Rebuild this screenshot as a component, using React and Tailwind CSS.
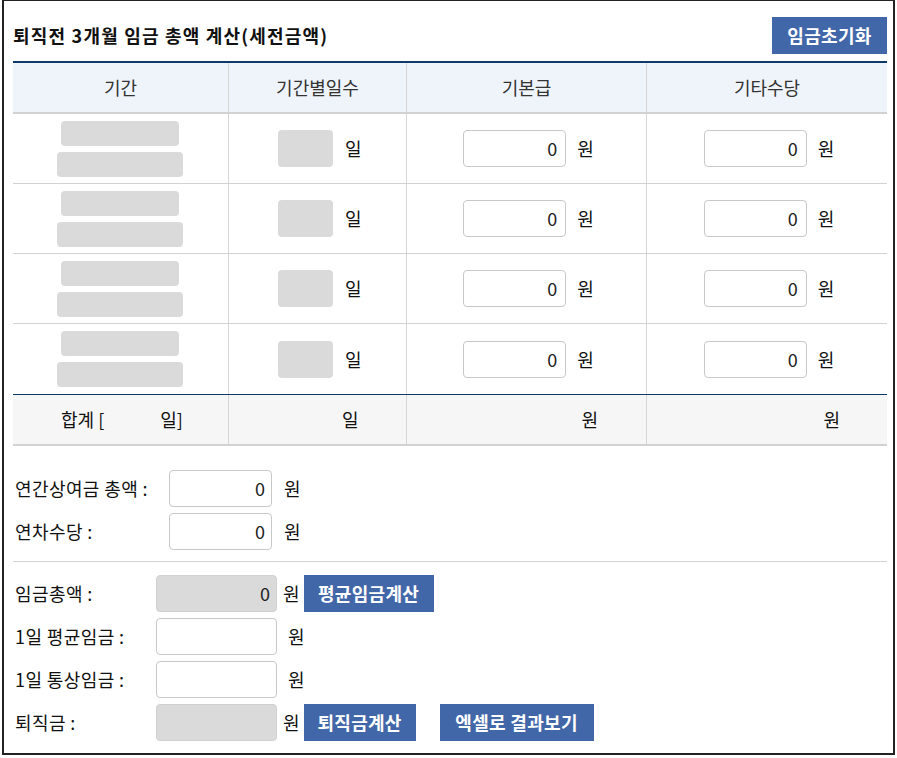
const font = { fontFamily: '"Noto Sans CJK KR", "Noto Sans", sans-serif' };

const rows = [0, 1, 2, 3];

function MoneyCell({ last }) {
  return (
    <div className={`flex items-center justify-center gap-[11px] pl-[4px] ${last ? "" : "border-r border-[#d6d6d6]"}`}>
      <div className="flex h-[37px] w-[103px] items-center justify-end rounded-[4px] border border-[#c8c8c8] bg-white pr-[8px] text-[18px] text-[#222]">
        0
      </div>
      <span className="text-[18px] text-[#111]">원</span>
    </div>
  );
}

function Btn({ children, className = "" }) {
  return (
    <button
      type="button"
      className={`flex h-[37px] items-center justify-center bg-[#4267a8] text-[18px] font-bold tracking-[0.3px] text-white ${className}`}
    >
      {children}
    </button>
  );
}

function FieldRow({ label, labelW, inputW, gray, value, unitGap, children }) {
  return (
    <div className="flex h-[37px] items-center">
      <span className="text-[18px] tracking-[0.4px] text-[#111]" style={{ width: labelW }}>
        {label}
      </span>
      <div
        className={`flex h-[37px] items-center justify-end rounded-[4px] border pr-[6px] text-[18px] text-[#222] ${
          gray ? "border-[#d0d0d0] bg-[#dadada]" : "border-[#c8c8c8] bg-white"
        }`}
        style={{ width: inputW }}
      >
        {value}
      </div>
      <span className="text-[18px] text-[#111]" style={{ marginLeft: unitGap }}>
        원
      </span>
      {children}
    </div>
  );
}

export default function App() {
  return (
    <div className="min-h-screen bg-white" style={font}>
      <div className="ml-[2px] w-[893px] border-2 border-t-[1px] border-[#222] bg-white pl-[9px] pr-[6px] pb-[12px]">
        <div className="flex h-[60px] items-center justify-between pt-[8px]">
          <h2 className="text-[18px] font-bold tracking-[1.2px] text-[#111]">
            퇴직전 3개월 임금 총액 계산(세전금액)
          </h2>
          <Btn className="w-[115px]">임금초기화</Btn>
        </div>

        <div className="border-t-2 border-[#0d3868]">
          <div className="grid h-[51px] grid-cols-[216px_178px_240px_240px] border-b-2 border-[#d2d2d2] bg-[#eff3fa] text-[18px] text-[#333]">
            <div className="flex items-center justify-center border-r border-[#d6d6d6]">기간</div>
            <div className="flex items-center justify-center border-r border-[#d6d6d6]">기간별일수</div>
            <div className="flex items-center justify-center border-r border-[#d6d6d6]">기본급</div>
            <div className="flex items-center justify-center">기타수당</div>
          </div>

          {rows.map((r) => (
            <div
              key={r}
              className={`grid h-[70px] grid-cols-[216px_178px_240px_240px] ${
                r < 3 ? "border-b border-[#d2d2d2]" : ""
              }`}
            >
              <div className="flex flex-col items-center justify-center gap-[6px] border-r border-[#d6d6d6] pr-[2px]">
                <div className="h-[25px] w-[118px] rounded-[4px] bg-[#dadada]" />
                <div className="h-[25px] w-[126px] rounded-[4px] bg-[#dadada]" />
              </div>
              <div className="flex items-center gap-[12px] border-r border-[#d6d6d6] pl-[49px]">
                <div className="h-[37px] w-[55px] rounded-[4px] bg-[#dadada]" />
                <span className="text-[18px] text-[#111]">일</span>
              </div>
              <MoneyCell />
              <MoneyCell last />
            </div>
          ))}

          <div className="grid h-[52px] grid-cols-[216px_178px_240px_240px] border-t border-b-2 border-t-[#0d3868] border-b-[#d2d2d2] bg-[#f6f6f6] text-[18px] text-[#111]">
            <div className="flex items-center border-r border-[#d6d6d6] pl-[48px]">
              <span>합계 [</span>
              <span className="ml-[56px]">일]</span>
            </div>
            <div className="flex items-center border-r border-[#d6d6d6] pl-[113px]">일</div>
            <div className="flex items-center justify-end border-r border-[#d6d6d6] pr-[48px]">원</div>
            <div className="flex items-center justify-end pr-[47px]">원</div>
          </div>
        </div>

        <div className="flex flex-col gap-[6px] border-b border-[#d2d2d2] pt-[24px] pb-[11px] pl-[2px]">
          <FieldRow label="연간상여금 총액 :" labelW={154} inputW={103} value="0" unitGap={12} />
          <FieldRow label="연차수당 :" labelW={154} inputW={103} value="0" unitGap={12} />
        </div>

        <div className="flex flex-col gap-[6px] pt-[13px] pl-[2px]">
          <FieldRow label="임금총액 :" labelW={141} inputW={121} gray value="0" unitGap={6}>
            <Btn className="ml-[4px] w-[130px]">평균임금계산</Btn>
          </FieldRow>
          <FieldRow label="1일 평균임금 :" labelW={141} inputW={121} value="" unitGap={11} />
          <FieldRow label="1일 통상임금 :" labelW={141} inputW={121} value="" unitGap={11} />
          <FieldRow label="퇴직금 :" labelW={141} inputW={121} gray value="" unitGap={6}>
            <Btn className="ml-[4px] w-[112px]">퇴직금계산</Btn>
            <Btn className="ml-[24px] w-[154px]">엑셀로 결과보기</Btn>
          </FieldRow>
        </div>
      </div>
    </div>
  );
}
